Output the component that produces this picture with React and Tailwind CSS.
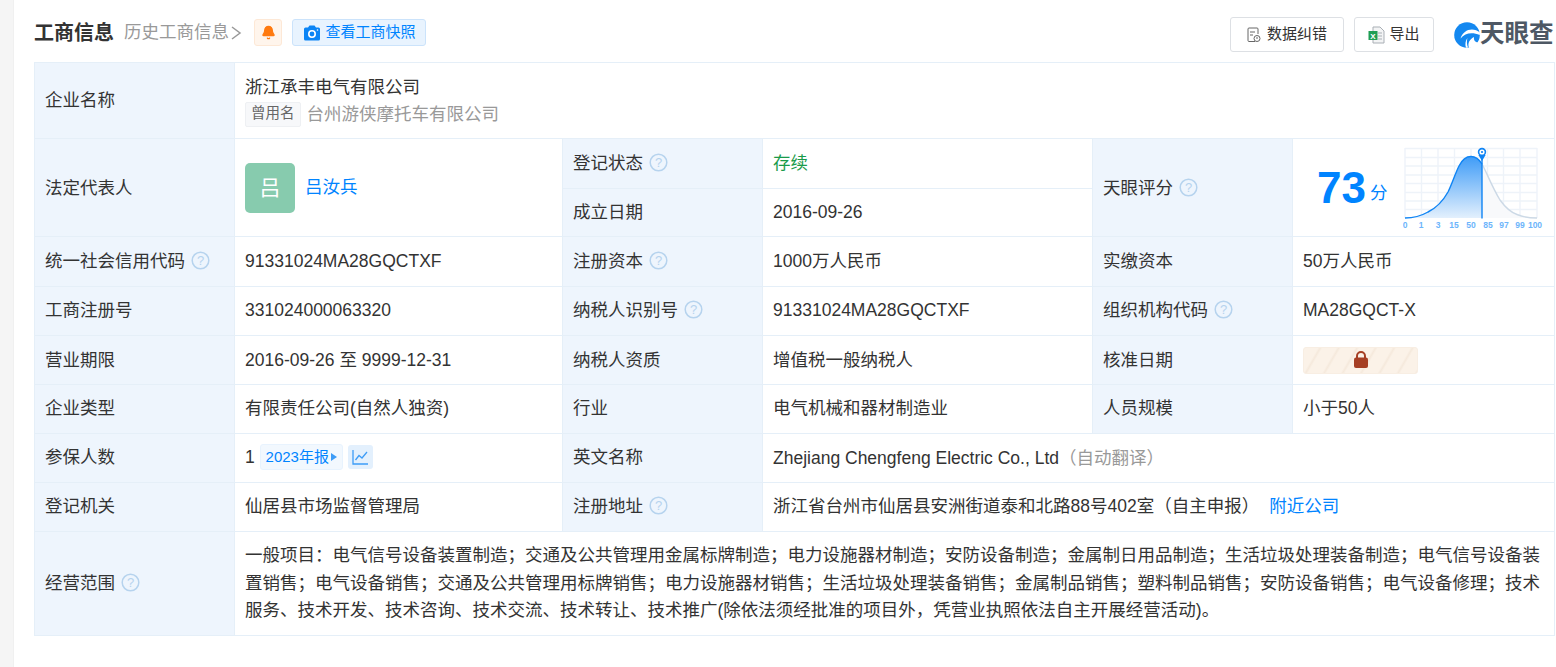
import { Bell } from "lucide-react";

const font = { fontFamily: '"Liberation Sans", "Noto Sans CJK SC", sans-serif' };

function Help() {
  return (
    <svg width="19" height="19" viewBox="0 0 19 19" className="inline-block ml-[6px] align-[-3px]">
      <circle cx="9.5" cy="9.5" r="8.3" fill="none" stroke="#b6d3ee" strokeWidth="1.5" />
      <text x="9.5" y="14" textAnchor="middle" fontSize="13" fill="#b6d3ee" fontFamily="Liberation Sans">?</text>
    </svg>
  );
}

function Label({ children, help, rowSpan, className }) {
  return (
    <td rowSpan={rowSpan} className={`border border-[#e5eff8] bg-[#eef5fd] px-[10px] py-0 text-[#333] ${className || ""}`}>
      {children}
      {help && <Help />}
    </td>
  );
}

function Value({ children, colSpan, rowSpan, className }) {
  return (
    <td colSpan={colSpan} rowSpan={rowSpan} className={`border border-[#e5eff8] bg-white px-[10px] py-0 text-[#333] ${className || ""}`}>
      {children}
    </td>
  );
}

function ScoreChart() {
  const vs = [1405, 1421.5, 1438, 1454.5, 1471, 1487.5, 1503.5, 1520, 1537];
  const hs = [148.5, 157.5, 166, 175, 183.5, 192.5, 201, 209.5];
  const ticks = ["0", "1", "3", "15", "50", "85", "97", "99", "100"];
  const tickX = [1405, 1421, 1438, 1454, 1471, 1488, 1504, 1520, 1535];
  const curve = "M1405 218 C1414 218 1421 216 1428 212 C1436 208 1443 201 1448 192 C1452 184 1455 174 1459 166 C1462 160 1466 156.5 1471 156.5 C1476 156.5 1479 159 1482 164";
  const rest = "M1482 164 C1486 171 1492 187 1500 200 C1505 207 1510 212 1517 214.5 C1523 217 1530 218 1537 218";
  return (
    <svg width="140" height="84" viewBox="1403 146 140 84" className="block">
      <defs>
        <linearGradient id="area" x1="0" y1="0" x2="0" y2="1">
          <stop offset="0" stopColor="#3f9cf7" />
          <stop offset="1" stopColor="#e3f0fd" />
        </linearGradient>
      </defs>
      {vs.map((x) => (
        <line key={x} x1={x} x2={x} y1="148" y2="218" stroke="#eef3f9" strokeWidth="1.4" />
      ))}
      {hs.map((y) => (
        <line key={y} x1="1405" x2="1537" y1={y} y2={y} stroke="#eef3f9" strokeWidth="1.4" />
      ))}
      <path d={`${rest} L1482 218 Z`} fill="#f8f9fb" />
      <path d={rest} fill="none" stroke="#ccd9e6" strokeWidth="1.4" />
      <path d={`${curve} L1482 218 L1405 218 Z`} fill="url(#area)" />
      <path d={curve} fill="none" stroke="#0f84f4" strokeWidth="1.4" />
      <line x1="1482" x2="1482" y1="155" y2="218.5" stroke="#0f84f4" strokeWidth="1.4" />
      <path d="M1478.4 155 L1482 161 L1485.6 155 Z" fill="#0f84f4" />
      <circle cx="1482" cy="152" r="3.4" fill="#fff" stroke="#0f84f4" strokeWidth="1.6" />
      <circle cx="1482" cy="152" r="1.1" fill="#0f84f4" />
      {ticks.map((t, i) => (
        <text key={t} x={tickX[i]} y="228" textAnchor="middle" fontSize="8.5" fontWeight="700" fill="#6db5fb" fontFamily="Liberation Sans">
          {t}
        </text>
      ))}
    </svg>
  );
}

function LockBadge() {
  return (
    <div className="w-[115px] h-[27px] rounded-[3px] border border-[#f8eee3] flex items-center justify-center bg-[repeating-linear-gradient(120deg,#fbf2e8_0px,#fbf2e8_12px,#f5e9dc_14px,#fbf2e8_16px)]">
      <svg width="16" height="18" viewBox="0 0 16 18">
        <path d="M4 8 V5 a4 4 0 0 1 8 0 V8" fill="none" stroke="#a63f24" strokeWidth="2" />
        <rect x="1" y="6.5" width="14" height="10.5" rx="2" fill="#a63f24" />
      </svg>
    </div>
  );
}

export default function App() {
  return (
    <div className="flex w-[1556px] h-[667px] overflow-hidden bg-white text-[17.5px] text-[#333]" style={font}>
      <div className="w-[14px] shrink-0 bg-[#f5f5f5] border-r border-[#f0f0f0]" />
      <div className="flex-1 pl-[20px] pr-[1px]">
        <div className="h-[62px] pt-[3px] flex items-center">
          <span className="text-[20px] font-bold text-[#333]">工商信息</span>
          <span className="ml-[10px] text-[#999] flex items-center">
            历史工商信息
            <svg width="12" height="16" viewBox="0 0 12 16" className="ml-[1px]">
              <path d="M2 2 L10 8 L2 14" fill="none" stroke="#999" strokeWidth="1.5" />
            </svg>
          </span>
          <span className="ml-[12px] w-[28px] h-[27px] rounded-[3px] border border-[#fde8d6] bg-[#fff5ec] flex items-center justify-center">
            <Bell size={15} fill="#ff7a0f" stroke="#ff7a0f" />
          </span>
          <span className="ml-[10px] h-[27px] w-[134px] rounded-[3px] border border-[#cbe3fb] bg-[#e8f3fe] flex items-center justify-center text-[15px] text-[#0084ff]">
            <svg width="18" height="16" viewBox="0 0 18 16" className="mr-[4px] ml-[1px]">
              <path d="M1 4 a1.5 1.5 0 0 1 1.5 -1.5 H5 L6.5 .5 H11.5 L13 2.5 H15.5 A1.5 1.5 0 0 1 17 4 V14 A1.5 1.5 0 0 1 15.5 15.5 H2.5 A1.5 1.5 0 0 1 1 14 Z" fill="#0a84f5" />
              <circle cx="9" cy="9" r="3.2" fill="none" stroke="#fff" strokeWidth="1.6" />
              <circle cx="14.5" cy="5" r=".8" fill="#fff" />
            </svg>
            查看工商快照
          </span>
          <div className="ml-auto mt-[4px] flex items-center">
            <button className="w-[114px] h-[35px] rounded-[3px] border border-[#dde0e4] bg-white flex items-center justify-center text-[15px] text-[#333]">
              <svg width="14" height="16" viewBox="0 0 14 16" className="mr-[6px]">
                <path d="M8 14.5 H2 a1 1 0 0 1 -1 -1 V2 a1 1 0 0 1 1 -1 H10 a1 1 0 0 1 1 1 V7" fill="none" stroke="#666" />
                <path d="M3 5 H8 M3 8 H6" stroke="#666" />
                <circle cx="10" cy="11.5" r="3" fill="none" stroke="#666" />
                <path d="M10 10 V12" stroke="#666" />
              </svg>
              数据纠错
            </button>
            <button className="ml-[10px] w-[80px] h-[35px] rounded-[3px] border border-[#dde0e4] bg-white flex items-center justify-center text-[15px] text-[#333]">
              <svg width="17" height="18" viewBox="0 0 17 18" className="mr-[4px]">
                <path d="M5 1 H12 L16 5 V17 H5 Z" fill="#f3f4f5" stroke="#a9afb5" />
                <path d="M10 7 H14 M10 10 H14 M10 13 H14" stroke="#a9afb5" />
                <rect x="0.5" y="5" width="9" height="9" fill="#1e9e54" />
                <text x="5" y="12.5" textAnchor="middle" fontSize="8" fontWeight="700" fill="#fff" fontFamily="Liberation Sans">X</text>
              </svg>
              导出
            </button>
            <div className="ml-[20px] w-[101px] flex items-center">
              <svg width="26" height="26" viewBox="0 0 26 26" className="shrink-0">
                <circle cx="13" cy="13" r="12.8" fill="#1488f0" />
                <path d="M26 10.5 C19 4.5 9 7.5 6.5 16.5 C11 11 18 10 25.8 13 Z" fill="#fff" />
                <path d="M15 26 C13.5 21.5 15 17.5 20 15 C19.5 18 21 20.5 24.5 20.5 C22 24 19 25.6 15 26 Z" fill="#fff" />
                <path d="M13.5 16 C12.5 19 12.8 22.5 14 25.5 L12 25.8 C10.8 22.5 11.5 18.5 13.5 16 Z" fill="#fff" />
              </svg>
              <span className="font-bold text-[24.5px] leading-none text-[#4e5864]">天眼查</span>
            </div>
          </div>
        </div>
        <table className="w-[1520px] table-fixed border-collapse">
          <colgroup>
            <col className="w-[200px]" />
            <col className="w-[328px]" />
            <col className="w-[200px]" />
            <col className="w-[330px]" />
            <col className="w-[200px]" />
            <col className="w-[262px]" />
          </colgroup>
          <tbody>
            <tr className="h-[76px]">
              <Label>企业名称</Label>
              <Value colSpan={5}>
                <div className="leading-[26px]">浙江承丰电气有限公司</div>
                <div className="flex items-center mt-[1px]">
                  <span className="h-[25px] px-[5px] flex items-center rounded-[2px] border border-[#eef0f3] bg-[#f7f8fa] text-[14.5px] text-[#666]">曾用名</span>
                  <span className="ml-[6px] text-[#999]">台州游侠摩托车有限公司</span>
                </div>
              </Value>
            </tr>
            <tr className="h-[50px]">
              <Label rowSpan={2} className="pt-[2px]">法定代表人</Label>
              <Value rowSpan={2}>
                <div className="flex items-center">
                  <div className="w-[50px] h-[50px] rounded-[5px] bg-[#87cbae] flex items-center justify-center text-[21px] text-white">吕</div>
                  <span className="ml-[10px] text-[#0084ff]">吕汝兵</span>
                </div>
              </Value>
              <Label help>登记状态</Label>
              <Value><span className="text-[#1a9b4a]">存续</span></Value>
              <Label rowSpan={2} help className="pt-[2px]">天眼评分</Label>
              <Value rowSpan={2} className="!p-0">
                <div className="flex items-center">
                  <span className="ml-[24px] w-[50px] text-[44px] font-bold leading-none text-[#0084ff]">73</span>
                  <span className="ml-[3px] mt-[12px] text-[#0084ff]">分</span>
                  <div className="ml-[15px]"><ScoreChart /></div>
                </div>
              </Value>
            </tr>
            <tr className="h-[48px]">
              <Label>成立日期</Label>
              <Value>2016-09-26</Value>
            </tr>
            <tr className="h-[50px]">
              <Label help>统一社会信用代码</Label>
              <Value>91331024MA28GQCTXF</Value>
              <Label help>注册资本</Label>
              <Value>1000万人民币</Value>
              <Label>实缴资本</Label>
              <Value>50万人民币</Value>
            </tr>
            <tr className="h-[49px] [&>td]:pb-[2px]">
              <Label>工商注册号</Label>
              <Value>331024000063320</Value>
              <Label help>纳税人识别号</Label>
              <Value>91331024MA28GQCTXF</Value>
              <Label help>组织机构代码</Label>
              <Value>MA28GQCT-X</Value>
            </tr>
            <tr className="h-[49px]">
              <Label>营业期限</Label>
              <Value>2016-09-26 至 9999-12-31</Value>
              <Label>纳税人资质</Label>
              <Value>增值税一般纳税人</Value>
              <Label>核准日期</Label>
              <Value><LockBadge /></Value>
            </tr>
            <tr className="h-[49px] [&>td]:pb-[2px]">
              <Label>企业类型</Label>
              <Value>有限责任公司(自然人独资)</Value>
              <Label>行业</Label>
              <Value>电气机械和器材制造业</Value>
              <Label>人员规模</Label>
              <Value>小于50人</Value>
            </tr>
            <tr className="h-[49px]">
              <Label className="pb-[2px]">参保人数</Label>
              <Value className="pb-[2px]">
                <div className="flex items-center">
                  1
                  <span className="ml-[5px] h-[26px] w-[83px] rounded-[3px] border border-[#e8f3fe] bg-[#f2f8fe] flex items-center justify-center text-[15px] text-[#0084ff]">
                    2023年报
                    <span className="ml-[2px] border-y-[4px] border-l-[6px] border-y-transparent border-l-[#3d9cf7]" />
                  </span>
                  <span className="ml-[5px] w-[25px] h-[24px] rounded-[3px] bg-[#e3f0fd] flex items-center justify-center">
                    <svg width="17" height="16" viewBox="0 0 17 16">
                      <path d="M1 1 V15 H16" fill="none" stroke="#3d9cf7" strokeWidth="1.3" />
                      <path d="M3.5 11 L7 6.5 L10 9 L15 3" fill="none" stroke="#3d9cf7" strokeWidth="1.3" />
                    </svg>
                  </span>
                </div>
              </Value>
              <Label className="pb-[2px]">英文名称</Label>
              <Value colSpan={3}>
                Zhejiang Chengfeng Electric Co., Ltd<span className="text-[#999]">（自动翻译）</span>
              </Value>
            </tr>
            <tr className="h-[49px] [&>td]:pb-[2px]">
              <Label>登记机关</Label>
              <Value>仙居县市场监督管理局</Value>
              <Label help>注册地址</Label>
              <Value colSpan={3}>
                浙江省台州市仙居县安洲街道泰和北路88号402室（自主申报）
                <span className="ml-[10px] text-[#0084ff]">附近公司</span>
              </Value>
            </tr>
            <tr className="h-[104px]">
              <Label help>经营范围</Label>
              <Value colSpan={5} className="leading-[27.5px]">
                一般项目：电气信号设备装置制造；交通及公共管理用金属标牌制造；电力设施器材制造；安防设备制造；金属制日用品制造；生活垃圾处理装备制造；电气信号设备装置销售；电气设备销售；交通及公共管理用标牌销售；电力设施器材销售；生活垃圾处理装备销售；金属制品销售；塑料制品销售；安防设备销售；电气设备修理；技术服务、技术开发、技术咨询、技术交流、技术转让、技术推广(除依法须经批准的项目外，凭营业执照依法自主开展经营活动)。
              </Value>
            </tr>
          </tbody>
        </table>
      </div>
    </div>
  );
}
